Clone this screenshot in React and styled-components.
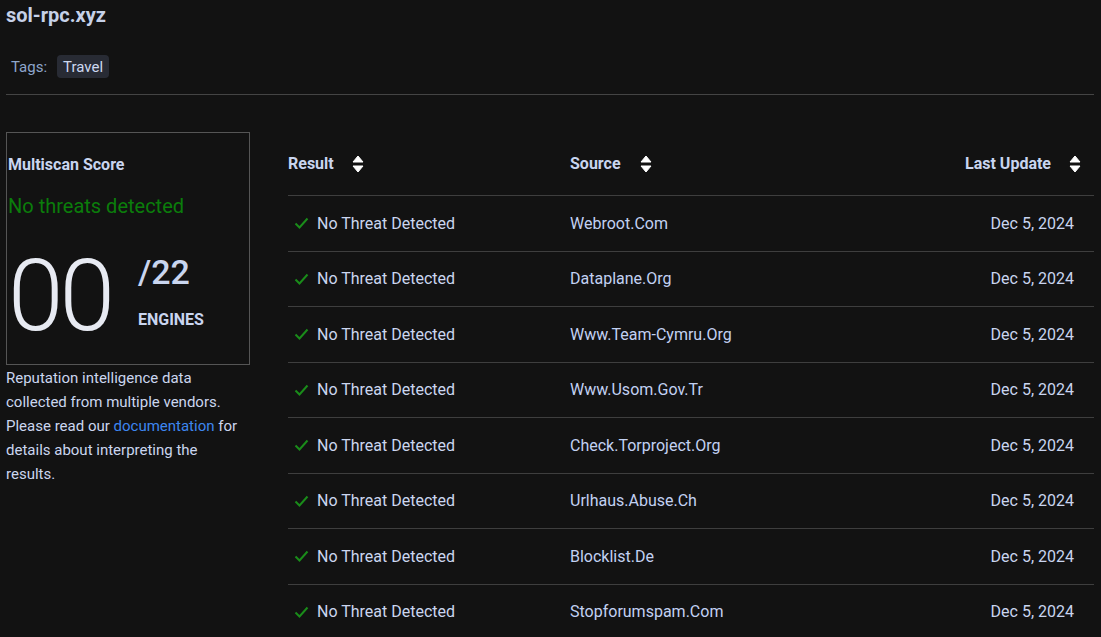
import styled, { createGlobalStyle } from 'styled-components';

const GlobalStyle = createGlobalStyle`
  html, body {
    margin: 0;
    padding: 0;
    background: #121212;
  }
  body {
    font-family: Roboto, "Liberation Sans", sans-serif;
    color: #c9d5ef;
  }
`;

const Page = styled.div`
  padding: 0 7px 0 6px;
  width: 1101px;
  height: 637px;
  box-sizing: border-box;
  overflow: hidden;
`;

const Title = styled.h1`
  margin: 0;
  font-size: 20px;
  line-height: 30px;
  font-weight: 700;
  color: #c6d1e8;
`;

const TagRow = styled.div`
  display: flex;
  align-items: center;
  gap: 10px;
  margin-top: 25px;
  padding: 0 0 16px 5px;
  border-bottom: 1px solid #444;
  font-size: 15px;
`;

const TagLabel = styled.span`
  color: #8ea6cc;
`;

const Tag = styled.span`
  display: inline-flex;
  align-items: center;
  height: 23px;
  padding: 0 6px;
  border-radius: 4px;
  background: #282b34;
  color: #cdd8f0;
`;

const Main = styled.div`
  display: flex;
  gap: 38px;
  margin-top: 37px;
`;

const Side = styled.aside`
  width: 244px;
  flex-shrink: 0;
`;

const ScoreCard = styled.div`
  box-sizing: border-box;
  height: 233px;
  border: 1px solid #555;
  padding: 21px 0 0 1px;
  display: flex;
  flex-direction: column;
`;

const CardTitle = styled.div`
  font-size: 16px;
  line-height: 22px;
  font-weight: 700;
  color: #c9d5ef;
`;

const Status = styled.div`
  margin-top: 17px;
  font-size: 20px;
  line-height: 26px;
  color: #0b7d0b;
`;

const ScoreRow = styled.div`
  display: flex;
  align-items: flex-start;
  gap: 27px;
  margin-top: 27px;
`;

const BigScore = styled.div`
  font-size: 100px;
  line-height: 100px;
  font-weight: 300;
  color: #e7eaf2;
  letter-spacing: -4px;
`;

const Total = styled.div`
  display: flex;
  flex-direction: column;
  padding-top: 6px;
`;

const TotalNum = styled.span`
  font-size: 34px;
  line-height: 40px;
  font-weight: 500;
  color: #c9d5ef;
`;

const Engines = styled.span`
  margin-top: 18px;
  font-size: 16px;
  font-weight: 700;
  color: #c9d5ef;
`;

const Note = styled.p`
  margin: 1px 0 0;
  font-size: 15px;
  line-height: 24px;
  color: #cbd6ef;
`;

const Link = styled.a`
  color: #3d86ef;
  text-decoration: none;
`;

const Table = styled.div`
  flex: 1;
`;

const Row = styled.div`
  display: grid;
  grid-template-columns: 282px 1fr auto;
  align-items: center;
  box-sizing: border-box;
  height: ${p => (p.$head ? '64px' : '55.5px')};
  border-bottom: 1px solid #3e3e3e;
  font-size: 16px;
`;

const HeadCell = styled.div`
  display: flex;
  align-items: center;
  gap: ${p => p.$gap}px;
  font-weight: 700;
  color: #c9d5ef;
  justify-self: ${p => (p.$right ? 'end' : 'start')};
  padding-right: ${p => (p.$right ? '13px' : '0')};
`;

const ResultCell = styled.div`
  display: flex;
  align-items: center;
  gap: 8px;
  padding-left: 6px;
  color: #cbd6ef;
`;

const SourceCell = styled.div`
  color: #c2d1f2;
`;

const DateCell = styled.div`
  justify-self: end;
  padding-right: 20px;
  color: #c9d5ef;
`;

const SortIcon = () => (
  <svg width="12" height="18" viewBox="0 0 12 18">
    <path d="M6 1 L11 7 H1 Z" fill="#fff" stroke="#fff" strokeWidth="1" strokeLinejoin="round" />
    <path d="M6 17 L11 11 H1 Z" fill="#fff" stroke="#fff" strokeWidth="1" strokeLinejoin="round" />
  </svg>
);

const Check = () => (
  <svg width="15" height="12" viewBox="0 0 15 12">
    <path d="M1.5 6.5 L5.5 10.5 L13.5 1.5" fill="none" stroke="#1a8c1a" strokeWidth="2" />
  </svg>
);

const rows = [
  'Webroot.Com',
  'Dataplane.Org',
  'Www.Team-Cymru.Org',
  'Www.Usom.Gov.Tr',
  'Check.Torproject.Org',
  'Urlhaus.Abuse.Ch',
  'Blocklist.De',
  'Stopforumspam.Com',
];

export default function App() {
  return (
    <Page>
      <GlobalStyle />
      <Title>sol-rpc.xyz</Title>
      <TagRow>
        <TagLabel>Tags:</TagLabel>
        <Tag>Travel</Tag>
      </TagRow>
      <Main>
        <Side>
          <ScoreCard>
            <CardTitle>Multiscan Score</CardTitle>
            <Status>No threats detected</Status>
            <ScoreRow>
              <BigScore>00</BigScore>
              <Total>
                <TotalNum>/22</TotalNum>
                <Engines>ENGINES</Engines>
              </Total>
            </ScoreRow>
          </ScoreCard>
          <Note>
            Reputation intelligence data collected from multiple vendors. Please read our{' '}
            <Link href="#">documentation</Link> for details about interpreting the results.
          </Note>
        </Side>
        <Table>
          <Row $head>
            <HeadCell $gap={18}>Result <SortIcon /></HeadCell>
            <HeadCell $gap={19}>Source <SortIcon /></HeadCell>
            <HeadCell $gap={18} $right>Last Update <SortIcon /></HeadCell>
          </Row>
          {rows.map(src => (
            <Row key={src}>
              <ResultCell><Check />No Threat Detected</ResultCell>
              <SourceCell>{src}</SourceCell>
              <DateCell>Dec 5, 2024</DateCell>
            </Row>
          ))}
        </Table>
      </Main>
    </Page>
  );
}
